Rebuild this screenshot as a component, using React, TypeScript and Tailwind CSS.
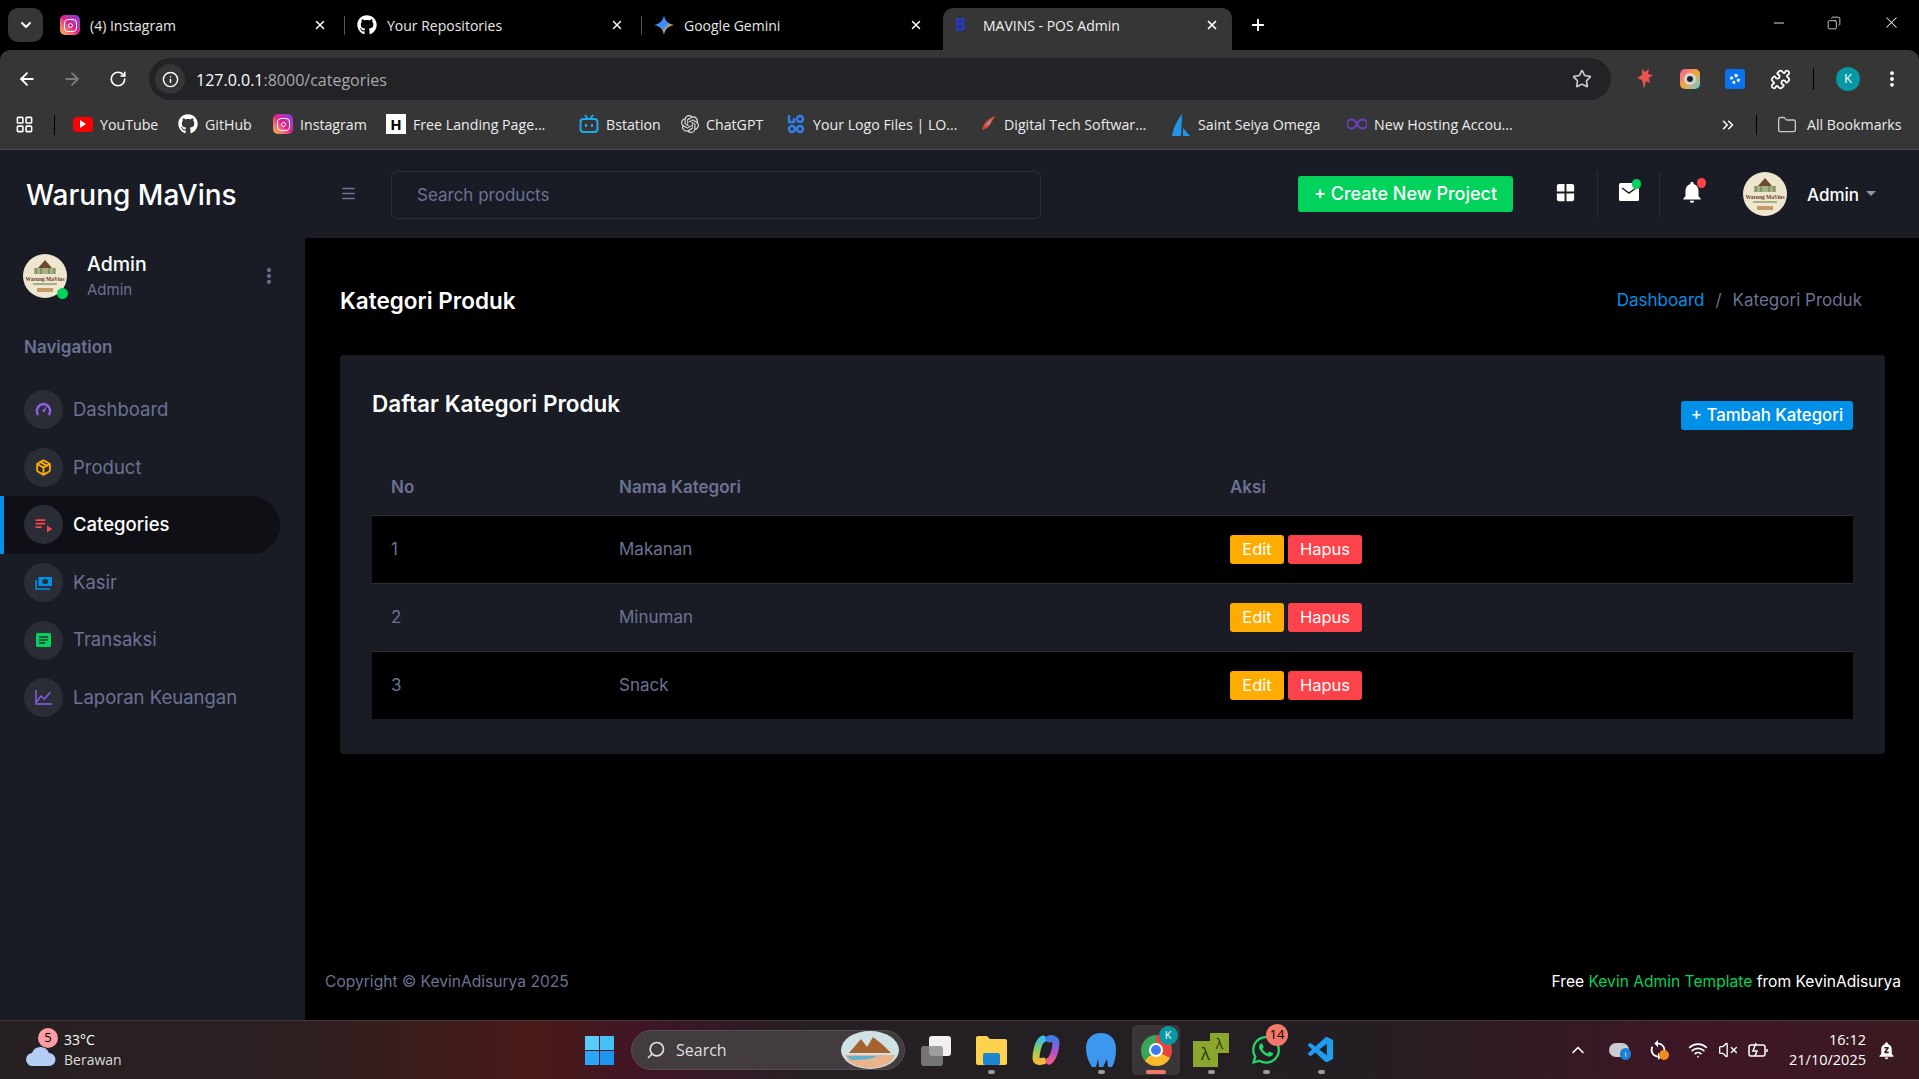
import type { ReactNode } from "react";
import {
  ArrowLeft,
  ArrowRight,
  ChevronDown,
  ChevronUp,
  ChevronsRight,
  Copy,
  EllipsisVertical,
  Folder,
  Info,
  LayoutGrid,
  Menu,
  Minus,
  Plus,
  Puzzle,
  RotateCw,
  Search,
  Star,
  VolumeX,
  Wifi,
  X,
} from "lucide-react";
import { FaGithub, FaWhatsapp } from "react-icons/fa";
import { SiOpenai } from "react-icons/si";
import { VscVscode } from "react-icons/vsc";
import { MdNotifications, MdNotificationsPaused, MdPlaylistPlay, MdSync, MdWindow } from "react-icons/md";
import { LuPackage } from "react-icons/lu";

const chromeFont = "font-['Open_Sans','Noto_Sans',sans-serif]";
const appFont = "font-['Inter','Noto_Sans',sans-serif]";

function InstaIcon() {
  return (
    <span className="flex h-[20px] w-[20px] shrink-0 items-center justify-center rounded-[5px] bg-gradient-to-tr from-[#fdb52b] via-[#e1198b] to-[#7b2fe0]">
      <span className="flex h-[13px] w-[13px] items-center justify-center rounded-[4px] border-[1.5px] border-white">
        <span className="h-[5px] w-[5px] rounded-full border-[1.5px] border-white" />
      </span>
    </span>
  );
}

function GeminiIcon() {
  return (
    <svg width="20" height="20" viewBox="0 0 20 20">
      <defs>
        <linearGradient id="gem" x1="0" y1="0" x2="1" y2="1">
          <stop offset="0" stopColor="#3f8cf5" />
          <stop offset="0.55" stopColor="#3f8cf5" />
          <stop offset="0.7" stopColor="#f4b52c" />
          <stop offset="1" stopColor="#ea4c3c" />
        </linearGradient>
      </defs>
      <path d="M10 0c.8 5.500 4 9 10 10-6 1-9.200 4.500-10 10-.8-5.500-4-9-10-10 6-1 9.200-4.500 10-10z" fill="url(#gem)" />
    </svg>
  );
}

function Tab({ icon, title, width, sep = true }: { icon: ReactNode; title: string; width: string; sep?: boolean }) {
  return (
    <div className={`mb-[8px] flex h-[34px] shrink-0 items-center pl-[12px] ${width}`}>
      <span className="flex w-[20px] justify-center">{icon}</span>
      <span className="ml-[10px] flex-1 text-[14px] text-[#e8e8e8]">{title}</span>
      <X size={14} strokeWidth={2.5} className="text-white" />
      <span className="flex w-[18px] justify-end">{sep && <span className="block h-[19px] w-px bg-[#555]" />}</span>
    </div>
  );
}

function BrowserChrome() {
  const marks: { w: string; icon: ReactNode; label: string }[] = [
    {
      w: "w-[105px]",
      icon: (
        <span className="flex h-[15px] w-[20px] items-center justify-center rounded-[4px] bg-[#f00]">
          <span className="h-0 w-0 border-y-[4px] border-l-[6px] border-y-transparent border-l-white" />
        </span>
      ),
      label: "YouTube",
    },
    { w: "w-[95px]", icon: <FaGithub size={20} className="text-white" />, label: "GitHub" },
    { w: "w-[113px]", icon: <InstaIcon />, label: "Instagram" },
    {
      w: "w-[193px]",
      icon: (
        <span className="flex h-[20px] w-[20px] items-center justify-center bg-white text-[15px] font-bold text-black">H</span>
      ),
      label: "Free Landing Page...",
    },
    {
      w: "w-[102px]",
      icon: (
        <svg width="20" height="20" viewBox="0 0 20 20" fill="none" stroke="#20a9e6" strokeWidth="2">
          <rect x="1.5" y="5" width="17" height="13" rx="3" />
          <path d="M6 1l3 4M14 1l-3 4M7 10v3M13 10v3" />
        </svg>
      ),
      label: "Bstation",
    },
    { w: "w-[105px]", icon: <SiOpenai size={18} className="text-[#ddd]" />, label: "ChatGPT" },
    {
      w: "w-[194px]",
      icon: (
        <svg width="20" height="20" viewBox="0 0 20 20" fill="none" stroke="#2f80ed" strokeWidth="2.4">
          <path d="M3 1v7h5V4" />
          <circle cx="14" cy="5" r="3" />
          <circle cx="6" cy="15" r="3" />
          <circle cx="14" cy="15" r="3" />
        </svg>
      ),
      label: "Your Logo Files | LO...",
    },
    {
      w: "w-[191px]",
      icon: (
        <svg width="17" height="20" viewBox="0 0 17 20">
          <path d="M15 2C9 4 4 8 2 16c3-1 6-2 8-5 1-3 4-6 5-9z" fill="#e0433a" />
          <path d="M12 5C9 7 7 9 5 12l5-2z" fill="#999" />
        </svg>
      ),
      label: "Digital Tech Softwar...",
    },
    {
      w: "w-[176px]",
      icon: (
        <svg width="20" height="22" viewBox="0 0 20 22">
          <path d="M11 0C7 5 2 14 1 22h9z" fill="#2196e8" />
          <path d="M12 14l7 8h-7z" fill="#2196e8" />
        </svg>
      ),
      label: "Saint Seiya Omega",
    },
    {
      w: "w-[169px]",
      icon: (
        <svg width="20" height="12" viewBox="0 0 20 12" fill="none" stroke="#6a3fc4" strokeWidth="2">
          <path d="M10 6C8 2 6 1.500 4.500 1.500a4.500 4.500 0 000 9C6 10.500 8 10 10 6c2-4 4-4.500 5.500-4.500a4.500 4.500 0 010 9C14 10.500 12 10 10 6z" />
        </svg>
      ),
      label: "New Hosting Accou...",
    },
  ];

  return (
    <div className={`shrink-0 bg-black ${chromeFont}`}>
      {/* tab strip */}
      <div className="flex h-[50px] items-end pl-[8px]">
        <div className="mb-[8px] mr-[5px] flex h-[34px] w-[35px] items-center justify-center rounded-[10px] bg-[#363636]">
          <ChevronDown size={16} strokeWidth={3} className="text-white" />
        </div>
        <Tab width="w-[297px]" icon={<InstaIcon />} title="(4) Instagram" />
        <Tab width="w-[297px]" icon={<FaGithub size={20} className="text-white" />} title="Your Repositories" />
        <Tab width="w-[299px]" icon={<GeminiIcon />} title="Google Gemini" sep={false} />
        <div className="ml-[2px] flex h-[42px] w-[289px] items-center rounded-t-[10px] bg-[#363636] pb-[8px] pl-[12px]">
          <span className="w-[20px] text-[17px] font-bold text-[#2438c9]">B</span>
          <span className="ml-[8px] flex-1 text-[14px] text-[#f0f0f0]">MAVINS - POS Admin</span>
          <X size={14} strokeWidth={3} className="mr-[13px] text-white" />
        </div>
        <Plus size={18} strokeWidth={2.5} className="mb-[16px] ml-[17px] text-white" />
        <div className="mb-[18px] ml-auto flex items-center">
          <Minus size={16} strokeWidth={1.4} className="mr-[40px] text-[#eee]" />
          <Copy size={14} strokeWidth={1.4} className="mr-[41px] -scale-x-100 text-[#eee]" />
          <X size={19} strokeWidth={1.3} className="mr-[18px] text-[#eee]" />
        </div>
      </div>
      {/* address bar */}
      <div className="flex h-[50px] items-end rounded-t-[10px] bg-[#363636]">
        <div className="flex h-[42px] w-full items-center pl-[17px]">
          <ArrowLeft size={20} strokeWidth={2.2} className="text-white" />
          <ArrowRight size={20} strokeWidth={2.2} className="ml-[25px] text-[#7c7c7c]" />
          <RotateCw size={18} strokeWidth={2.2} className="ml-[27px] text-white" />
          <div className="ml-[22px] flex h-[42px] w-[1462px] items-center rounded-full bg-[#222327] pl-[6px]">
            <span className="flex h-[30px] w-[30px] items-center justify-center rounded-full bg-[#363636]">
              <Info size={17} className="text-white" />
            </span>
            <span className="ml-[11px] flex-1 pt-[1px] text-[16px] text-white">
              127.0.0.1<span className="text-[#a9a9a9]">:8000/categories</span>
            </span>
            <Star size={20} className="mr-[19px] text-[#c9c9c9]" />
          </div>
          <svg width="22" height="24" viewBox="0 0 22 24" className="ml-[23px]">
            <path d="M8 2l3 3 4-3-1 5 5 1-4 3 1 5-4-2-2 8-2-9-5-2 5-3z" fill="#e9524f" />
          </svg>
          <span className="ml-[24px] flex h-[20px] w-[20px] items-center justify-center rounded-[5px] bg-gradient-to-br from-[#f04e98] via-[#f5a623] to-[#20c4d8]">
            <span className="h-[12px] w-[12px] rounded-full border-[3px] border-[#cfd8dc] bg-[#222]" />
          </span>
          <span className="ml-[25px] flex h-[20px] w-[20px] items-center justify-center rounded-[3px] bg-[#0b73f0]">
            <span className="h-[10px] w-[10px] rounded-full border-[3px] border-dotted border-white" />
          </span>
          <Puzzle size={21} strokeWidth={2} className="ml-[25px] text-white" />
          <span className="ml-[22px] h-[22px] w-px bg-black" />
          <span className="ml-[22px] flex h-[24px] w-[24px] items-center justify-center rounded-full bg-[#0897a5] text-[13px] text-white">K</span>
          <EllipsisVertical size={20} strokeWidth={2.6} className="ml-[22px] text-white" />
        </div>
      </div>
      {/* bookmarks */}
      <div className="flex h-[50px] items-center border-b border-[#4c4c4c] bg-[#363636] pl-[15px] text-[14.200px] text-[#ececec]">
        <LayoutGrid size={19} strokeWidth={2} className="text-white" />
        <span className="ml-[20px] mr-[18px] h-[20px] w-px bg-black" />
        {marks.map((m) => (
          <div key={m.label} className={`flex shrink-0 items-center gap-[7px] whitespace-nowrap ${m.w}`}>
            {m.icon}
            <span>{m.label}</span>
          </div>
        ))}
        <ChevronsRight size={18} strokeWidth={2} className="ml-[203px] text-white" />
        <span className="ml-[19px] h-[20px] w-px bg-black" />
        <Folder size={20} strokeWidth={1.6} className="ml-[20px] text-[#c7c7c7]" />
        <span className="ml-[10px] whitespace-nowrap">All Bookmarks</span>
      </div>
    </div>
  );
}

function LogoBadge({ className }: { className: string }) {
  return (
    <svg viewBox="0 0 44 44" className={className}>
      <circle cx="22" cy="22" r="22" fill="#efe6cf" />
      <path d="M15 14l7-8 7 8z" fill="#6d4a2e" />
      <rect x="11" y="14" width="22" height="6" fill="#a9b184" />
      <path d="M13 14v6M18 14v6M26 14v6M31 14v6" stroke="#587a45" strokeWidth="1" />
      <text x="22" y="26.500" textAnchor="middle" fontSize="5.500" fontWeight="700" fill="#6d3a1e" fontFamily="Liberation Serif, serif">
        Warung MaVins
      </text>
      <path d="M10 30h24" stroke="#587a45" strokeWidth="1" />
      <path d="M14 36h16" stroke="#c39a68" strokeWidth="4" />
    </svg>
  );
}

function IconChip({ children }: { children: ReactNode }) {
  return (
    <span className="flex h-[39px] w-[39px] shrink-0 items-center justify-center rounded-full bg-[#2a2d36]">
      {children}
    </span>
  );
}

const navItems: { label: string; active?: boolean; icon: ReactNode }[] = [
  {
    label: "Dashboard",
    icon: (
      <svg width="17" height="15" viewBox="0 0 17 15" fill="none">
        <path d="M3.200 13A7 7 0 0 1 8.500 2a7 7 0 0 1 5.300 11" stroke="#8f5fe8" strokeWidth="2.400" />
        <path d="M7 9l5-5-2.500 6.500z" fill="#8f5fe8" />
      </svg>
    ),
  },
  { label: "Product", icon: <LuPackage size={17} strokeWidth={2.6} className="text-[#ffab00]" /> },
  { label: "Categories", active: true, icon: <MdPlaylistPlay size={21} className="text-[#fc424a]" /> },
  {
    label: "Kasir",
    icon: (
      <svg width="18" height="14" viewBox="0 0 18 14" fill="none">
        <rect x="3.500" y="1" width="13.500" height="9" fill="#0090e7" />
        <ellipse cx="10.200" cy="5.500" rx="3" ry="2.600" fill="#2a2d36" />
        <path d="M1 4v9h14" stroke="#0090e7" strokeWidth="1.500" />
      </svg>
    ),
  },
  {
    label: "Transaksi",
    icon: (
      <svg width="15" height="14" viewBox="0 0 15 14">
        <rect width="15" height="14" rx="1.500" fill="#00d25b" />
        <path d="M3 4h9M3 7h9M3 10h6" stroke="#2a2d36" strokeWidth="1.300" />
      </svg>
    ),
  },
  {
    label: "Laporan Keuangan",
    icon: (
      <svg width="17" height="15" viewBox="0 0 17 15" fill="none" stroke="#8f5fe8" strokeWidth="1.400">
        <path d="M1 0v14h16" />
        <path d="M1.500 12l4.500-6 3.500 3 6-7" />
      </svg>
    ),
  },
];

function Sidebar() {
  return (
    <aside className="flex w-[305px] shrink-0 flex-col bg-[#191c24]">
      <div className="flex items-center pl-[23px] pt-[13px]">
        <span className="relative">
          <LogoBadge className="h-[44px] w-[44px]" />
          <span className="absolute bottom-[-1px] right-[-1px] h-[11px] w-[11px] rounded-full bg-[#00d25b]" />
        </span>
        <div className="ml-[20px] flex-1">
          <div className="text-[19.500px] font-medium leading-[26px] text-white">Admin</div>
          <div className="mt-[3px] text-[15px] leading-[20px] text-[#6c7293]">Admin</div>
        </div>
        <EllipsisVertical size={20} strokeWidth={3} className="mr-[26px] text-[#6c7293]" />
      </div>
      <div className="mt-[37px] pl-[24px] text-[17px] font-semibold leading-[20px] text-[#6c7293]">Navigation</div>
      <nav className="mt-[24px] flex flex-col pr-[25px]">
        {navItems.map((item) => (
          <a
            key={item.label}
            className={`flex h-[57.600px] items-center gap-[10px] rounded-r-full text-[18.500px] ${
              item.active
                ? "border-l-[4px] border-[#0090e7] bg-[#0f1015] pl-[20px] font-medium text-white"
                : "pl-[24px] text-[#6c7293]"
            }`}
          >
            <IconChip>{item.icon}</IconChip>
            {item.label}
          </a>
        ))}
      </nav>
    </aside>
  );
}

function TopBar() {
  return (
    <header className="flex h-[88px] shrink-0 items-center bg-[#191c24]">
      <div className="mt-[2px] w-[305px] shrink-0 pl-[26px] text-[28px] font-medium text-white">Warung MaVins</div>
      <Menu size={17} strokeWidth={2} className="mb-[2px] ml-[35px] text-[#6c7293]" />
      <div className="mt-[2px] ml-[34px] flex h-[48px] w-[650px] items-center rounded-[6px] border border-[#2c2e33] pt-[2px] pl-[25px] text-[17px] text-[#6c7293]">
        Search products
      </div>
      <button className="mb-[1px] ml-[257px] h-[36px] w-[215px] rounded-[3px] bg-[#00d25b] text-[18px] font-medium text-white">
        + Create New Project
      </button>
      <MdWindow size={23} className="mb-[3px] ml-[41px] text-white" />
      <span className="ml-[20px] h-[45px] w-px bg-[#2c2e33]" />
      <span className="relative mb-[5px] ml-[21px]">
        <svg width="20" height="18" viewBox="0 0 20 18" className="block">
          <rect width="20" height="18" rx="1.500" fill="#fff" />
          <path d="M3 5l7 5 7-5" fill="none" stroke="#191c24" strokeWidth="1.500" />
        </svg>
        <span className="absolute right-[-2px] top-[-4px] h-[10px] w-[9px] rounded-full bg-[#00d25b]" />
      </span>
      <span className="ml-[20px] h-[45px] w-px bg-[#2c2e33]" />
      <span className="relative mb-[5px] ml-[19px]">
        <MdNotifications size={26} className="text-white" />
        <span className="absolute right-[-1px] top-[-1px] h-[10px] w-[9px] rounded-full bg-[#fc424a]" />
      </span>
      <LogoBadge className="ml-[38px] h-[44px] w-[44px]" />
      <span className="mt-[3px] ml-[20px] text-[17px] font-medium text-white">Admin</span>
      <span className="mb-[2px] ml-[7px] h-0 w-0 border-x-[5px] border-t-[5px] border-x-transparent border-t-[#8e94a9]" />
    </header>
  );
}

const rows = [
  { no: 1, name: "Makanan" },
  { no: 2, name: "Minuman" },
  { no: 3, name: "Snack" },
];

function CategoryCard() {
  return (
    <section className="mr-[34px] ml-[35px] rounded-[4px] bg-[#191c24] px-[32px] pt-[32px] pb-[35px]">
      <div className="flex items-start justify-between">
        <h3 className="text-[22.500px] font-semibold leading-[34px] text-white">Daftar Kategori Produk</h3>
        <button className="mt-[14px] h-[29px] w-[172px] rounded-[3px] bg-[#0090e7] text-[16.800px] font-medium text-white">
          + Tambah Kategori
        </button>
      </div>
      <table className="mt-[30px] w-full table-fixed border-collapse text-[17px]">
        <colgroup>
          <col className="w-[228px]" />
          <col className="w-[611px]" />
          <col />
        </colgroup>
        <thead>
          <tr className="h-[55px] text-left text-[#6c7293]">
            <th className="pl-[19px] font-semibold">No</th>
            <th className="pl-[19px] font-semibold">Nama Kategori</th>
            <th className="pl-[19px] font-semibold">Aksi</th>
          </tr>
        </thead>
        <tbody>
          {rows.map((r, i) => (
            <tr key={r.no} className={`h-[68px] border-t border-[#2c2e33] text-[#6c7293] ${i % 2 === 0 ? "bg-black" : ""}`}>
              <td className="pt-[1px] pl-[19px]">{r.no}</td>
              <td className="pt-[1px] pl-[19px]">{r.name}</td>
              <td className="pl-[19px]">
                <div className="flex gap-[4px]">
                  <button className="h-[29px] w-[54px] rounded-[3px] bg-[#ffab00] text-[16.500px] text-white">Edit</button>
                  <button className="h-[29px] w-[74px] rounded-[3px] bg-[#fc424a] text-[16.500px] text-white">Hapus</button>
                </div>
              </td>
            </tr>
          ))}
        </tbody>
      </table>
    </section>
  );
}

function Main() {
  return (
    <main className="flex min-w-0 flex-1 flex-col bg-black">
      <div className="flex h-[117px] shrink-0 items-center justify-between pt-[8px] pr-[57px] pl-[35px]">
        <h2 className="text-[22.500px] font-semibold text-white">Kategori Produk</h2>
        <div className="flex items-center text-[17px]">
          <span className="text-[#0090e7]">Dashboard</span>
          <span className="mx-[11px] text-[#6c7293]">/</span>
          <span className="text-[#6c7293]">Kategori Produk</span>
        </div>
      </div>
      <CategoryCard />
      <footer className="mt-auto flex h-[76px] items-center justify-between pr-[18px] pl-[20px] text-[15.600px]">
        <span className="text-[#6c7293]">Copyright © KevinAdisurya 2025</span>
        <span className="text-white">
          Free <span className="text-[#00d25b]">Kevin Admin Template</span> from KevinAdisurya
        </span>
      </footer>
    </main>
  );
}

function AppDot({ children, dot = false, active = false }: { children: ReactNode; dot?: boolean; active?: boolean }) {
  return (
    <div className={`relative flex h-[50px] w-[48px] shrink-0 items-center justify-center rounded-[5px] ${active ? "bg-[#3a3538]" : ""}`}>
      {children}
      {dot && !active && <span className="absolute bottom-[1px] h-[4px] w-[7px] rounded-full bg-[#9a9a9a]" />}
      {active && <span className="absolute bottom-[1px] h-[4px] w-[20px] rounded-full bg-[#f2796a]" />}
    </div>
  );
}

function Taskbar() {
  return (
    <div className={`flex h-[59px] shrink-0 items-center border-t border-[#46393c] bg-[linear-gradient(90deg,#262022_0%,#2b1f20_15%,#4a1a18_28%,#3f1428_34%,#262024_42%,#221e21_70%,#3e1626_88%,#3a1a20_100%)] text-white ${chromeFont}`}>
      <div className="relative ml-[25px] w-[39px] shrink-0">
        <svg width="31" height="22" viewBox="0 0 31 22" className="mt-[12px]">
          <path d="M8 21a6.500 6.500 0 0 1-1-13A9 9 0 0 1 24 8a6.500 6.500 0 0 1 0 13z" fill="#b4cdf5" />
        </svg>
        <span className="absolute left-[13px] top-[-5px] flex h-[20px] w-[20px] items-center justify-center rounded-full bg-[#ff9da4] text-[13px] text-black">5</span>
      </div>
      <div className="w-[521px] shrink-0 text-[14px] leading-[20px]">
        <div>33°C</div>
        <div className="text-[#dcdcdc]">Berawan</div>
      </div>
      <div className="grid h-[29px] w-[29px] shrink-0 grid-cols-2 gap-[1px]">
        <span className="bg-[#58cdfa]" />
        <span className="bg-[#46c0f8]" />
        <span className="bg-[#2aa8f5]" />
        <span className="bg-[#1b96f0]" />
      </div>
      <div className="ml-[17px] flex h-[40px] w-[274px] shrink-0 items-center rounded-full border border-[#554c50] bg-[#423c40] pl-[14px] text-[16px] text-[#dfdfdf]">
        <Search size={20} strokeWidth={2} className="-scale-x-100" />
        <span className="ml-[10px] flex-1">Search</span>
        <svg width="62" height="38" viewBox="0 0 62 38" className="mr-[3px]">
          <ellipse cx="31" cy="19" rx="29" ry="19" fill="#cfe3e6" />
          <path d="M10 22L22 8l6 8 6-10 10 8 8 8z" fill="#a5642f" />
          <path d="M6 24h50c-2 8-12 13-25 13S8 32 6 24z" fill="#e9b48c" />
          <path d="M8 25h30c-4 3-14 4-26 4z" fill="#5fb3cf" />
        </svg>
      </div>
      <div className="relative ml-[16px] h-[36px] w-[30px] shrink-0">
        <span className="absolute right-0 top-[4px] h-[20px] w-[22px] rounded-[3px] bg-[#f0f0f0]" />
        <span className="absolute bottom-[2px] left-0 h-[20px] w-[22px] rounded-[3px] bg-[#8a8a8a]/80" />
      </div>
      <div className="ml-[16px] flex gap-[7px]">
        <AppDot dot>
          <svg width="31" height="30" viewBox="0 0 31 30">
            <path d="M0 3a2 2 0 0 1 2-2h9l3 3h15a2 2 0 0 1 2 2v22a2 2 0 0 1-2 2H2a2 2 0 0 1-2-2z" fill="#ffd24d" />
            <rect x="7" y="18" width="17" height="12" rx="2" fill="#1c86d1" />
          </svg>
        </AppDot>
        <AppDot>
          <svg width="30" height="32" viewBox="0 0 30 32" fill="none" strokeWidth="7" strokeLinecap="round">
            <defs>
              <linearGradient id="cop1" x1="0" y1="0" x2="0" y2="1">
                <stop offset="0" stopColor="#3dc0e8" />
                <stop offset="0.5" stopColor="#8ccf5a" />
                <stop offset="1" stopColor="#f6b93c" />
              </linearGradient>
              <linearGradient id="cop2" x1="0" y1="0" x2="0" y2="1">
                <stop offset="0" stopColor="#3d7de8" />
                <stop offset="0.6" stopColor="#b04fd0" />
                <stop offset="1" stopColor="#ee5a8f" />
              </linearGradient>
            </defs>
            <path d="M12 5C7 7 5 20 5 24s4 4 7 3" stroke="url(#cop1)" />
            <path d="M18 5c3-1 7 0 7 4 0 6-3 16-7 18" stroke="url(#cop2)" />
          </svg>
        </AppDot>
        <AppDot dot>
          <svg width="30" height="34" viewBox="0 0 30 34">
            <path d="M15 0c9 0 15 6 15 16 0 7-1 13-4 18h-4l-1-8-4 8h-4l-1-8-2 8H6C2 28 0 22 0 15 0 6 6 0 15 0z" fill="#3d97ee" />
          </svg>
        </AppDot>
        <AppDot active>
          <span className="relative flex h-[31px] w-[31px] items-center justify-center rounded-full bg-[conic-gradient(#e8453c_0deg_120deg,#f9bb2d_120deg_230deg,#3aa757_230deg_360deg)]">
            <span className="h-[14px] w-[14px] rounded-full border-[2px] border-white bg-[#3b7ded]" />
            <span className="absolute right-[-6px] top-[-9px] flex h-[19px] w-[19px] items-center justify-center rounded-full bg-[#0897a5] text-[11px]">K</span>
          </span>
        </AppDot>
        <AppDot dot>
          <span className="relative block h-[34px] w-[36px]">
            <span className="absolute bottom-0 left-0 flex h-[26px] w-[25px] items-center justify-center bg-[#8aa62d] text-[17px] text-[#2c3a0b]">λ</span>
            <span className="absolute right-0 top-0 flex h-[20px] w-[19px] items-center justify-center bg-[#8aa62d] text-[14px] text-[#2c3a0b]">λ</span>
          </span>
        </AppDot>
        <AppDot dot>
          <span className="relative block">
            <FaWhatsapp size={32} className="text-[#25d366]" />
            <span className="absolute right-[-6px] top-[-10px] flex h-[22px] w-[22px] items-center justify-center rounded-full bg-[#f2796a] text-[13px] text-black">14</span>
          </span>
        </AppDot>
        <AppDot dot>
          <VscVscode size={31} className="text-[#1f9cf0]" />
        </AppDot>
      </div>
      <ChevronUp size={20} strokeWidth={2} className="ml-[223px]" />
      <span className="relative ml-[21px] block h-[14px] w-[20px] rounded-full bg-[#c9ccd1]">
        <span className="absolute bottom-[-3px] right-[-2px] flex h-[12px] w-[11px] items-center justify-center rounded-full bg-[#1c7fd6] text-[8px]">i</span>
      </span>
      <span className="relative ml-[18px]">
        <MdSync size={22} />
        <span className="absolute bottom-[1px] right-0 h-[10px] w-[10px] rounded-full bg-[#f28b20]" />
      </span>
      <Wifi size={20} strokeWidth={2} className="ml-[19px]" />
      <VolumeX size={20} strokeWidth={1.6} className="ml-[10px]" />
      <svg width="20" height="16" viewBox="0 0 20 16" fill="none" stroke="#fff" strokeWidth="1.500" className="ml-[10px]">
        <rect x="1" y="3" width="16" height="11" rx="2" />
        <path d="M19 7v3M8 1L5 9h4l-2 5" />
      </svg>
      <div className="ml-[2px] w-[96px] shrink-0 text-right text-[14.500px] leading-[20px]">
        <div>16:12</div>
        <div>21/10/2025</div>
      </div>
      <MdNotificationsPaused size={21} className="ml-[10px]" />
    </div>
  );
}

export default function App() {
  return (
    <div className={`flex h-screen w-full flex-col overflow-hidden bg-black ${appFont}`}>
      <BrowserChrome />
      <TopBar />
      <div className="flex min-h-0 flex-1">
        <Sidebar />
        <Main />
      </div>
      <Taskbar />
    </div>
  );
}
